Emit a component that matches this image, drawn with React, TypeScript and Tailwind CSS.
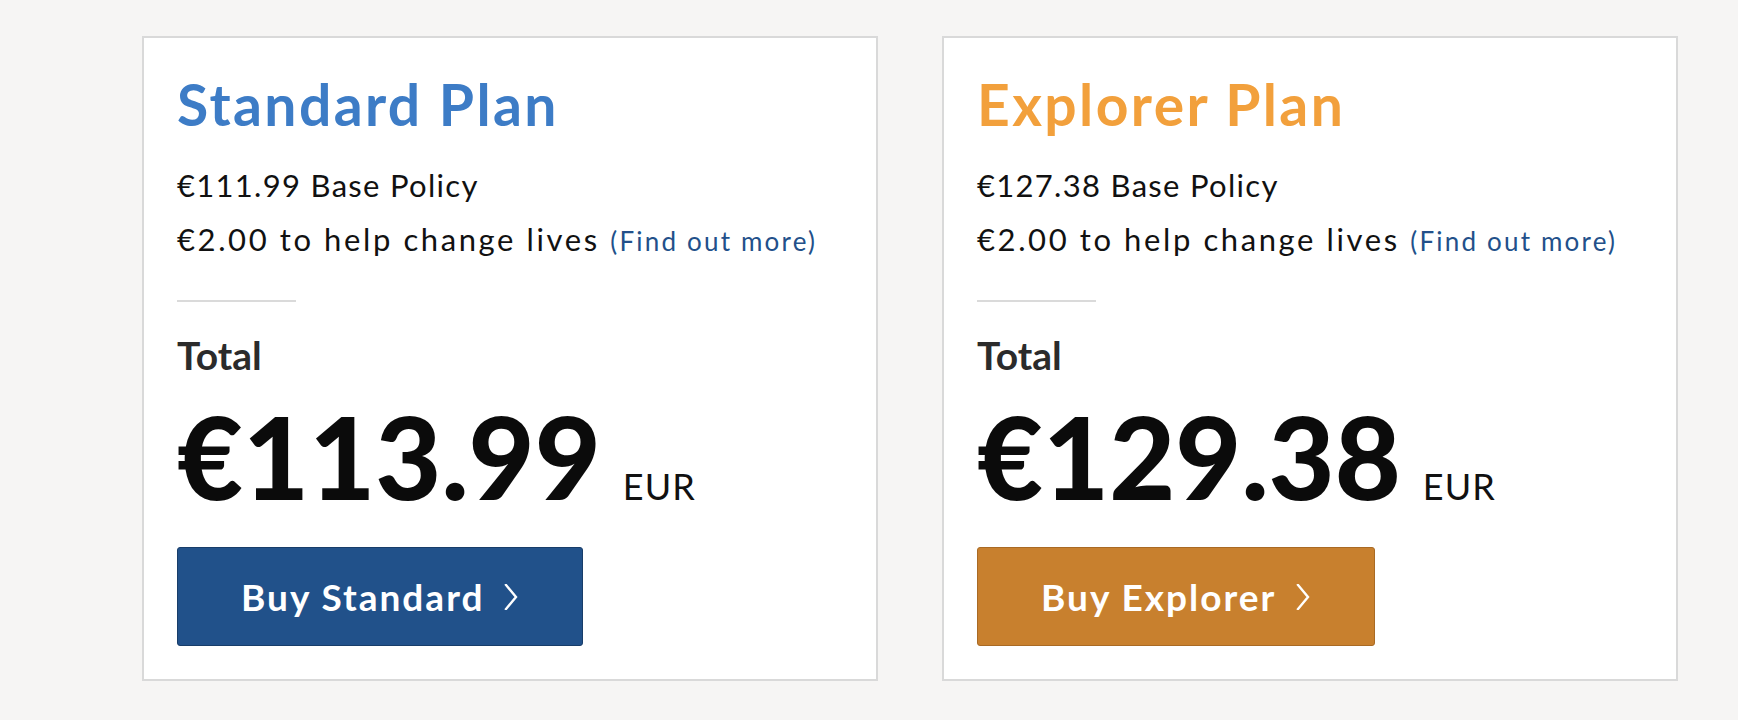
import React from 'react';

interface Plan {
  name: string;
  base: string;
  total: string;
  cta: string;
  titleClass: string;
  buttonClass: string;
}

const plans: Plan[] = [
  {
    name: 'Standard Plan',
    base: '€111.99',
    total: '€113.99',
    cta: 'Buy Standard',
    titleClass: 'text-[#3d7cc6]',
    buttonClass: 'bg-[#21518a] border-[#183d69]',
  },
  {
    name: 'Explorer Plan',
    base: '€127.38',
    total: '€129.38',
    cta: 'Buy Explorer',
    titleClass: 'text-[#f2a03c]',
    buttonClass: 'bg-[#c8802e] border-[#a96a24]',
  },
];

function Chevron() {
  return (
    <svg width="16" height="26" viewBox="0 0 16 26" fill="none" className="ml-[19px]">
      <polyline points="3,1 13,13 3,25" stroke="white" strokeWidth="2.4" strokeLinecap="square" />
    </svg>
  );
}

function PlanCard({ plan }: { plan: Plan }) {
  return (
    <section className="w-[736px] border-2 border-[#d9d9d9] bg-white px-[33px] pt-[38px] pb-[33px]">
      <h2 className={`text-[57px] font-bold leading-[57px] tracking-[2.4px] ${plan.titleClass}`}>{plan.name}</h2>
      <div className="mt-[25px] text-[31px] leading-[54px] text-[#111]">
        <p className="tracking-[1.3px]">{plan.base} Base Policy</p>
        <p className="tracking-[2.6px]">
          €2.00 to help change lives{' '}
          <a href="#" className="text-[26px] tracking-[2.2px] text-[#22508a]">(Find out more)</a>
        </p>
      </div>
      <div className="mt-[32px] h-[2px] w-[119px] bg-[#dadada]" />
      <p className="mt-[34px] text-[39px] font-bold leading-[39px] text-[#2b2b2b]">Total</p>
      <div className="mt-[24px] flex items-baseline">
        <span className="text-[114px] font-black leading-[114px] text-[#0b0b0b]">{plan.total}</span>
        <span className="ml-[22px] text-[36px] tracking-[1px] text-[#111]">EUR</span>
      </div>
      <button
        type="button"
        className={`mt-[34px] flex h-[99px] items-center rounded-[3px] border px-[63px] text-[37px] font-bold tracking-[2px] text-white ${plan.buttonClass}`}
      >
        {plan.cta}
        <Chevron />
      </button>
    </section>
  );
}

export default function App() {
  return (
    <div className="min-h-[720px] bg-[#f6f5f4] pt-[36px] pl-[142px] font-['Lato',sans-serif]">
      <div className="flex gap-[64px]">
        {plans.map((p) => (
          <PlanCard key={p.name} plan={p} />
        ))}
      </div>
    </div>
  );
}
